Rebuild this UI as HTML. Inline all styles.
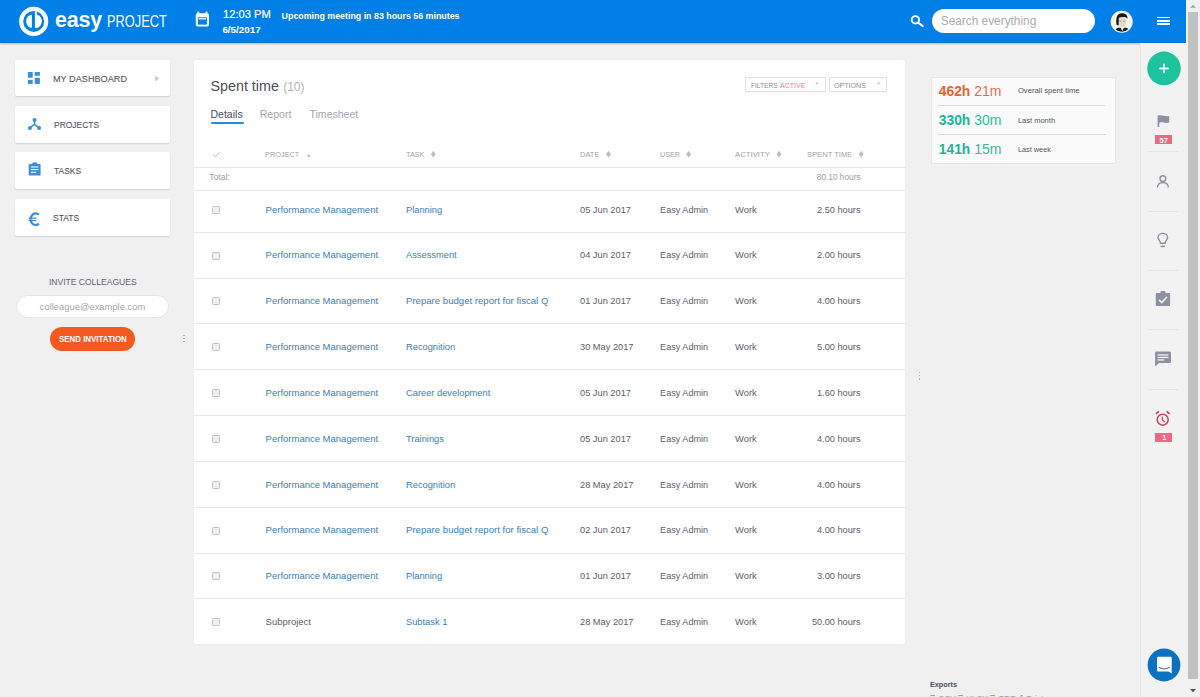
<!DOCTYPE html><html><head><meta charset="utf-8"><style>
html,body{margin:0;padding:0;}
body{width:1200px;height:697px;overflow:hidden;background:#f0f0f0;position:relative;font-family:"Liberation Sans",sans-serif;}
.t{position:absolute;line-height:1;white-space:nowrap;}
.r{position:absolute;box-sizing:border-box;}
svg{position:absolute;overflow:visible;}
</style></head><body>
<div class="r" style="left:0.00px;top:0.00px;width:1186.00px;height:43.00px;background:#0080e6;box-shadow:0 1px 2px rgba(0,0,0,0.22);border-bottom:1px solid #0574cc;"></div>
<svg style="left:0;top:0" width="60" height="43">
<circle cx="33.7" cy="21.4" r="12.55" fill="none" stroke="#fff" stroke-width="4.1"/>
<path d="M31.9,14.7 A5.7,6.55 0 0 0 31.9,27.8 Z" fill="#fff"/>
<path d="M34.9,11.2 L36.9,11.2 L36.9,14.6 A5.9,6.6 0 0 1 34.9,27.8 Z" fill="#fff"/>
</svg>
<div class="t " style="left:55.00px;top:10px;font-size:21.50px;color:#fff;font-weight:bold;letter-spacing:-0.2px;">easy</div>
<div class="t " style="left:106.50px;top:14px;font-size:15.80px;color:#fff;font-weight:normal;transform:scaleX(0.81);transform-origin:0 0;">PROJECT</div>
<svg style="left:0;top:0" width="220" height="43">
<rect x="195.8" y="13.2" width="13.2" height="13.4" rx="1.8" fill="#fff"/>
<rect x="197.4" y="11.6" width="1.8" height="3" fill="#fff"/>
<rect x="205.6" y="11.6" width="1.8" height="3" fill="#fff"/>
<rect x="197.9" y="17.2" width="9" height="7.4" fill="#0080e6"/>
<rect x="198.6" y="17.9" width="7.6" height="1.6" fill="#cfe6fb"/>
</svg>
<div class="t " style="left:222.90px;top:8px;font-size:11.60px;color:#fff;font-weight:normal;-webkit-text-stroke:0.2px #fff;transform:scaleX(0.9647);transform-origin:0 0;">12:03 PM</div>
<div class="t " style="left:222.40px;top:25px;font-size:9.84px;color:#fff;font-weight:bold;">6/5/2017</div>
<div class="t " style="left:281.60px;top:12px;font-size:8.85px;color:#fff;font-weight:bold;">Upcoming meeting in 83 hours 56 minutes</div>
<svg style="left:0;top:0" width="1200" height="43">
<circle cx="915.4" cy="19.8" r="3.7" fill="none" stroke="#fff" stroke-width="1.9"/>
<line x1="918.2" y1="22.6" x2="922.6" y2="26" stroke="#fff" stroke-width="2.2" stroke-linecap="round"/>
</svg>
<div class="r" style="left:931.70px;top:9.00px;width:163.30px;height:24.30px;background:#fff;border-radius:12.2px;"></div>
<div class="t " style="left:940.80px;top:16px;font-size:11.85px;color:#a8abb2;font-weight:normal;">Search everything</div>
<svg style="left:0;top:0" width="1200" height="43">
<defs><clipPath id="av"><circle cx="1121.7" cy="21.7" r="10"/></clipPath></defs>
<circle cx="1121.7" cy="21.7" r="11" fill="#fff"/>
<g clip-path="url(#av)">
<rect x="1110" y="10" width="24" height="24" fill="#f7f5f0"/>
<ellipse cx="1122.2" cy="22" rx="3.9" ry="5.3" fill="#e4d9c6"/>
<path d="M1116.6,25 C1115.8,19 1116.3,13.4 1121.8,13.2 C1126.2,13.2 1127.8,15.6 1127.3,19 L1126.2,17.4 C1123.5,16.6 1120.5,16.8 1118.8,18 L1118.6,25.5 Z" fill="#161616"/>
<path d="M1119.5,21.2 L1121.2,21.2 M1123.2,21.2 L1124.9,21.2" stroke="#8a7c6a" stroke-width="0.8"/>
<path d="M1114,34 L1115.6,29.2 C1117.5,27.8 1119.5,27.4 1121,28 L1122.3,30.5 L1123.6,28 C1125,27.4 1127,27.8 1128.6,29.2 L1130,34 Z" fill="#1e1e1e"/>
<path d="M1121,28.2 L1122.3,31 L1123.6,28.2 Z" fill="#f5f5f5"/>
</g>
</svg>
<div class="r" style="left:1156.70px;top:16.70px;width:13.30px;height:1.60px;background:#fff;"></div>
<div class="r" style="left:1156.70px;top:20.00px;width:13.30px;height:1.60px;background:#fff;"></div>
<div class="r" style="left:1156.70px;top:23.30px;width:13.30px;height:1.60px;background:#fff;"></div>
<div class="r" style="left:1186.00px;top:0.00px;width:14.00px;height:697.00px;background:#f1f1f1;"></div>
<div class="r" style="left:1187.60px;top:12.40px;width:10.40px;height:666.80px;background:#c1c1c1;"></div>
<svg style="left:0;top:0" width="1200" height="697">
<path d="M1190,7.7 L1193,4.7 L1196,7.7 Z" fill="#a3a3a3"/>
<path d="M1190,689 L1193,692.3 L1196,689 Z" fill="#505050"/>
</svg>
<div class="r" style="left:1140.00px;top:43.00px;width:46.00px;height:654.00px;background:#f2f2f2;border-left:1px solid #e6e6e6;"></div>
<svg style="left:0;top:0" width="1200" height="697">
<circle cx="1164" cy="68.4" r="16.8" fill="#1cc39c"/>
<rect x="1159.3" y="67.6" width="9.4" height="1.7" fill="#fff"/>
<rect x="1163.15" y="63.7" width="1.7" height="9.4" fill="#fff"/>
</svg>
<div class="r" style="left:1147.50px;top:150.90px;width:30.50px;height:1.00px;background:#e4e4e4;"></div>
<div class="r" style="left:1147.50px;top:210.50px;width:30.50px;height:1.00px;background:#e4e4e4;"></div>
<div class="r" style="left:1147.50px;top:269.70px;width:30.50px;height:1.00px;background:#e4e4e4;"></div>
<div class="r" style="left:1147.50px;top:329.00px;width:30.50px;height:1.00px;background:#e4e4e4;"></div>
<div class="r" style="left:1147.50px;top:388.90px;width:30.50px;height:1.00px;background:#e4e4e4;"></div>
<svg style="left:0;top:0" width="1200" height="697">
<!-- flag -->
<path d="M1157.6,115.2 L1157.6,127 L1159.3,127 L1159.3,122.8 C1162,121.5 1164.5,123.6 1169.2,122.6 L1169.2,116 C1165,117 1162.5,114.5 1157.6,115.6 Z" fill="#8b919e"/>
<!-- user -->
<circle cx="1162.9" cy="178.6" r="2.9" fill="none" stroke="#8b919e" stroke-width="1.4"/>
<path d="M1157.4,187.3 C1157.8,183.6 1160,182.6 1162.9,182.6 C1165.8,182.6 1168,183.6 1168.4,187.3" fill="none" stroke="#8b919e" stroke-width="1.4"/>
<!-- bulb -->
<path d="M1160.5,243.2 C1160.5,241 1158,239.5 1158,237.7 C1158,235.1 1160.2,233.4 1162.8,233.4 C1165.4,233.4 1167.6,235.1 1167.6,237.7 C1167.6,239.5 1165.1,241 1165.1,243.2 Z" fill="none" stroke="#8b919e" stroke-width="1.4"/>
<rect x="1160.6" y="245.6" width="4.4" height="1.5" fill="#8b919e"/>
<!-- clipboard -->
<rect x="1155.8" y="293" width="14.3" height="13" rx="1" fill="#8b919e"/>
<rect x="1160.4" y="291" width="5" height="3.4" rx="1" fill="#8b919e"/>
<path d="M1159,299.8 L1161.8,302.5 L1167,296.8" fill="none" stroke="#f2f2f2" stroke-width="1.6"/>
<!-- chat -->
<path d="M1156.5,351.5 L1169.6,351.5 C1170.4,351.5 1171,352.1 1171,352.9 L1171,361.5 C1171,362.3 1170.4,362.9 1169.6,362.9 L1159,362.9 L1155.1,366.5 L1155.1,352.9 C1155.1,352.1 1155.7,351.5 1156.5,351.5 Z" fill="#8b919e"/>
<rect x="1157.6" y="354.3" width="10.8" height="1.3" fill="#f2f2f2"/>
<rect x="1157.6" y="356.8" width="10.8" height="1.3" fill="#f2f2f2"/>
<rect x="1157.6" y="359.3" width="6.6" height="1.3" fill="#f2f2f2"/>
<!-- alarm -->
<circle cx="1162.7" cy="419.7" r="5.5" fill="none" stroke="#cc3b5d" stroke-width="1.5"/>
<path d="M1162.3,416.6 L1162.3,420 L1164.9,421.9" fill="none" stroke="#cc3b5d" stroke-width="1.2"/>
<path d="M1155.9,413.9 L1158.9,411.3" stroke="#cc3b5d" stroke-width="1.6"/>
<path d="M1169.6,413.9 L1166.6,411.3" stroke="#cc3b5d" stroke-width="1.6"/>
</svg>
<div class="r" style="left:1155.00px;top:135.20px;width:17.40px;height:9.00px;background:#ec6885;"></div>
<div class="t " style="left:1159.60px;top:137px;font-size:7.40px;color:#fff;font-weight:bold;">57</div>
<div class="r" style="left:1155.00px;top:433.00px;width:17.40px;height:8.50px;background:#ec6885;"></div>
<div class="t " style="left:1162.20px;top:434px;font-size:7.40px;color:#fff;font-weight:bold;">1</div>
<svg style="left:0;top:0" width="1200" height="697">
<circle cx="1164" cy="665" r="16.4" fill="#0a72bf"/>
<path d="M1157.8,656.8 L1170.9,656.8 C1171.3,656.8 1171.7,657.2 1171.7,657.6 L1171.7,673.5 L1168.5,671.4 L1157.8,671.4 C1157.4,671.4 1157,671 1157,670.6 L1157,657.6 C1157,657.2 1157.4,656.8 1157.8,656.8 Z" fill="#fff"/>
<path d="M1158.9,667.3 C1162,669.3 1166.5,669.3 1169.7,667.3" fill="none" stroke="#5f6d7c" stroke-width="1.1"/>
</svg>
<div class="r" style="left:14.80px;top:60.20px;width:155.40px;height:36.10px;background:#fff;border-radius:2px;box-shadow:0 1px 1.5px rgba(0,0,0,0.13);"></div>
<div class="t " style="left:52.60px;top:74px;font-size:9.80px;color:#4f5664;font-weight:normal;-webkit-text-stroke:0.1px #4f5664;transform:scaleX(0.9329);transform-origin:0 0;">MY DASHBOARD</div>
<div class="r" style="left:14.80px;top:106.00px;width:155.40px;height:37.20px;background:#fff;border-radius:2px;box-shadow:0 1px 1.5px rgba(0,0,0,0.13);"></div>
<div class="t " style="left:53.80px;top:120px;font-size:9.80px;color:#4f5664;font-weight:normal;-webkit-text-stroke:0.1px #4f5664;transform:scaleX(0.8647);transform-origin:0 0;">PROJECTS</div>
<div class="r" style="left:14.80px;top:151.80px;width:155.40px;height:37.20px;background:#fff;border-radius:2px;box-shadow:0 1px 1.5px rgba(0,0,0,0.13);"></div>
<div class="t " style="left:53.80px;top:166px;font-size:9.80px;color:#4f5664;font-weight:normal;-webkit-text-stroke:0.1px #4f5664;transform:scaleX(0.8661);transform-origin:0 0;">TASKS</div>
<div class="r" style="left:14.80px;top:198.50px;width:155.40px;height:37.10px;background:#fff;border-radius:2px;box-shadow:0 1px 1.5px rgba(0,0,0,0.13);"></div>
<div class="t " style="left:52.80px;top:213px;font-size:9.80px;color:#4f5664;font-weight:normal;-webkit-text-stroke:0.1px #4f5664;transform:scaleX(0.8696);transform-origin:0 0;">STATS</div>
<svg style="left:0;top:0" width="200" height="400">
<!-- dashboard -->
<rect x="27.9" y="72" width="4.8" height="5.7" fill="#3b8edb"/>
<rect x="34.7" y="72" width="5.2" height="3.8" fill="#3b8edb"/>
<rect x="27.9" y="79.9" width="4.8" height="4" fill="#3b8edb"/>
<rect x="34.7" y="77.8" width="5.2" height="6.1" fill="#3b8edb"/>
<!-- chevron -->
<path d="M155.2,75.6 L159.2,78.6 L155.2,81.6 Z" fill="#c8c9cc"/>
<!-- projects -->
<circle cx="34.5" cy="119.9" r="2" fill="#3b8edb"/>
<circle cx="29.9" cy="127.9" r="2" fill="#3b8edb"/>
<circle cx="39.1" cy="127.9" r="2" fill="#3b8edb"/>
<path d="M34.5,119.9 L34.5,124.4 L29.9,127.9 M34.5,124.4 L39.1,127.9" fill="none" stroke="#3b8edb" stroke-width="1.5"/>
<!-- tasks -->
<rect x="28.7" y="164" width="11.9" height="11.6" rx="1.2" fill="#3b8edb"/>
<rect x="32.2" y="162.6" width="4.9" height="2.6" rx="1" fill="#3b8edb"/>
<rect x="30.9" y="166.4" width="7.5" height="1.1" fill="#fff"/>
<rect x="30.9" y="169" width="7.5" height="1.1" fill="#fff"/>
<rect x="30.9" y="171.8" width="5.4" height="1.1" fill="#fff"/>
</svg>
<svg style="left:0;top:0" width="60" height="240">
<path d="M38.9,214.8 A5,5.8 0 1 0 38.9,223.6" fill="none" stroke="#3b8edb" stroke-width="2.2"/>
<rect x="28.5" y="217.5" width="8" height="1.25" fill="#3b8edb"/>
<rect x="28.5" y="219.9" width="7.5" height="1.25" fill="#3b8edb"/>
</svg>
<div class="t " style="left:48.50px;top:278px;font-size:9.30px;color:#5f6573;font-weight:normal;transform:scaleX(0.9162);transform-origin:0 0;">INVITE COLLEAGUES</div>
<div class="r" style="left:15.50px;top:294.80px;width:153.50px;height:23.70px;background:#fff;border:1px solid #e4e4e4;border-radius:12px;"></div>
<div class="t " style="left:39.80px;top:303px;font-size:9.38px;color:#a3a6ad;font-weight:normal;">colleague@example.com</div>
<div class="r" style="left:50.00px;top:327.00px;width:85.00px;height:23.80px;background:#f45a1f;border-radius:12px;"></div>
<div class="t " style="left:58.60px;top:335px;font-size:9.30px;color:#fff;font-weight:bold;transform:scaleX(0.8503);transform-origin:0 0;">SEND INVITATION</div>
<div class="r" style="left:183.40px;top:334.80px;width:1.40px;height:1.40px;background:#aaa;border-radius:1px;"></div>
<div class="r" style="left:183.40px;top:337.80px;width:1.40px;height:1.40px;background:#aaa;border-radius:1px;"></div>
<div class="r" style="left:183.40px;top:340.80px;width:1.40px;height:1.40px;background:#aaa;border-radius:1px;"></div>
<div class="r" style="left:918.90px;top:372.00px;width:1.40px;height:1.40px;background:#aaa;border-radius:1px;"></div>
<div class="r" style="left:918.90px;top:375.10px;width:1.40px;height:1.40px;background:#aaa;border-radius:1px;"></div>
<div class="r" style="left:918.90px;top:378.30px;width:1.40px;height:1.40px;background:#aaa;border-radius:1px;"></div>
<div class="r" style="left:194.00px;top:60.20px;width:711.30px;height:583.80px;background:#fff;border-radius:2px;box-shadow:0 0 1px rgba(0,0,0,0.08);"></div>
<div class="t " style="left:210.50px;top:79px;font-size:14.30px;color:#474d5a;font-weight:normal;">Spent time</div>
<div class="t " style="left:283.20px;top:81px;font-size:12.00px;color:#b3b5ba;font-weight:normal;">(10)</div>
<div class="t " style="left:210.50px;top:109px;font-size:10.53px;color:#4a4f5c;font-weight:normal;">Details</div>
<div class="t " style="left:259.70px;top:109px;font-size:10.60px;color:#a2a6ad;font-weight:normal;">Report</div>
<div class="t " style="left:309.50px;top:109px;font-size:10.52px;color:#a2a6ad;font-weight:normal;">Timesheet</div>
<div class="r" style="left:210.50px;top:122.30px;width:33.00px;height:1.90px;background:#2b8ad2;border-radius:1px;"></div>
<div class="r" style="left:745.30px;top:77.30px;width:80.70px;height:15.10px;border:1px solid #e0e0e0;border-radius:1px;"></div>
<div class="t " style="left:751.00px;top:82px;font-size:7.70px;color:#8a8f99;font-weight:normal;transform:scaleX(0.8556);transform-origin:0 0;">FILTERS</div>
<div class="t " style="left:780.00px;top:82px;font-size:7.70px;color:#e580a0;font-weight:normal;transform:scaleX(0.9169);transform-origin:0 0;">ACTIVE</div>
<div class="r" style="left:829.00px;top:77.30px;width:58.00px;height:15.10px;border:1px solid #e0e0e0;border-radius:1px;"></div>
<div class="t " style="left:834.40px;top:82px;font-size:7.70px;color:#8a8f99;font-weight:normal;transform:scaleX(0.9234);transform-origin:0 0;">OPTIONS</div>
<svg style="left:0;top:0" width="1200" height="697">
<path d="M815.3,82.6 L818.9,82.6 L817.1,84.8 Z" fill="#c4c6ca"/>
<path d="M876.9,82.6 L880.5,82.6 L878.7,84.8 Z" fill="#c4c6ca"/>
<path d="M213,154.6 L215.2,156.6 L219.8,152.2" fill="none" stroke="#b5b8be" stroke-width="0.9"/>
<path d="M306.7,156.7 L310.8,156.7 L308.75,154 Z" fill="#b9bdc4"/>
<path d="M433.3,150.8 L435.7,154.15 L433.3,157.5 L430.90000000000003,154.15 Z" fill="#b9bdc4"/>
<path d="M608.5,150.8 L610.9,154.15 L608.5,157.5 L606.1,154.15 Z" fill="#b9bdc4"/>
<path d="M688.55,150.8 L690.9499999999999,154.15 L688.55,157.5 L686.15,154.15 Z" fill="#b9bdc4"/>
<path d="M779,150.8 L781.4,154.15 L779,157.5 L776.6,154.15 Z" fill="#b9bdc4"/>
<path d="M861.25,150.8 L863.65,154.15 L861.25,157.5 L858.85,154.15 Z" fill="#b9bdc4"/>
</svg>
<div class="t " style="left:265.30px;top:151px;font-size:7.85px;color:#9ea2aa;font-weight:normal;transform:scaleX(0.9390);transform-origin:0 0;">PROJECT</div>
<div class="t " style="left:405.80px;top:151px;font-size:7.85px;color:#9ea2aa;font-weight:normal;transform:scaleX(0.9237);transform-origin:0 0;">TASK</div>
<div class="t " style="left:579.80px;top:151px;font-size:7.85px;color:#9ea2aa;font-weight:normal;transform:scaleX(0.9532);transform-origin:0 0;">DATE</div>
<div class="t " style="left:659.90px;top:151px;font-size:7.85px;color:#9ea2aa;font-weight:normal;transform:scaleX(0.9124);transform-origin:0 0;">USER</div>
<div class="t " style="left:734.80px;top:151px;font-size:7.85px;color:#9ea2aa;font-weight:normal;transform:scaleX(0.9879);transform-origin:0 0;">ACTIVITY</div>
<div class="t " style="left:807.10px;top:151px;font-size:7.85px;color:#9ea2aa;font-weight:normal;transform:scaleX(0.9675);transform-origin:0 0;">SPENT TIME</div>
<div class="r" style="left:194.00px;top:166.70px;width:711.30px;height:1.00px;background:#e8e8e8;"></div>
<div class="r" style="left:194.00px;top:189.90px;width:711.30px;height:1.00px;background:#e8e8e8;"></div>
<div class="t " style="left:209.20px;top:173px;font-size:8.60px;color:#9a9ea5;font-weight:normal;">Total:</div>
<div class="t " style="left:860.60px;top:173px;font-size:8.30px;color:#989ca3;font-weight:normal;transform:translateX(-100%);">80.10 hours</div>
<div class="r" style="left:194.00px;top:231.70px;width:711.30px;height:1.00px;background:#e8e8e8;"></div>
<div class="r" style="left:212.20px;top:205.75px;width:8.00px;height:8.00px;background:#f0f0f0;border:1px solid #c2c2c2;border-radius:1.5px;"></div>
<div class="t " style="left:265.60px;top:205px;font-size:9.50px;color:#3a7eb8;font-weight:normal;">Performance Management</div>
<div class="t " style="left:406.00px;top:206px;font-size:9.30px;color:#3a7eb8;font-weight:normal;">Planning</div>
<div class="t " style="left:580.00px;top:206px;font-size:9.25px;color:#5b606a;font-weight:normal;">05 Jun 2017</div>
<div class="t " style="left:660.10px;top:206px;font-size:9.10px;color:#5b606a;font-weight:normal;">Easy Admin</div>
<div class="t " style="left:735.10px;top:205px;font-size:9.40px;color:#5b606a;font-weight:normal;">Work</div>
<div class="t " style="left:860.50px;top:206px;font-size:9.20px;color:#5b606a;font-weight:normal;transform:translateX(-100%);">2.50 hours</div>
<div class="r" style="left:194.00px;top:277.53px;width:711.30px;height:1.00px;background:#e8e8e8;"></div>
<div class="r" style="left:212.20px;top:251.58px;width:8.00px;height:8.00px;background:#f0f0f0;border:1px solid #c2c2c2;border-radius:1.5px;"></div>
<div class="t " style="left:265.60px;top:250px;font-size:9.50px;color:#3a7eb8;font-weight:normal;">Performance Management</div>
<div class="t " style="left:406.00px;top:251px;font-size:9.30px;color:#3a7eb8;font-weight:normal;">Assessment</div>
<div class="t " style="left:580.00px;top:251px;font-size:9.25px;color:#5b606a;font-weight:normal;">04 Jun 2017</div>
<div class="t " style="left:660.10px;top:251px;font-size:9.10px;color:#5b606a;font-weight:normal;">Easy Admin</div>
<div class="t " style="left:735.10px;top:250px;font-size:9.40px;color:#5b606a;font-weight:normal;">Work</div>
<div class="t " style="left:860.50px;top:251px;font-size:9.20px;color:#5b606a;font-weight:normal;transform:translateX(-100%);">2.00 hours</div>
<div class="r" style="left:194.00px;top:323.36px;width:711.30px;height:1.00px;background:#e8e8e8;"></div>
<div class="r" style="left:212.20px;top:297.41px;width:8.00px;height:8.00px;background:#f0f0f0;border:1px solid #c2c2c2;border-radius:1.5px;"></div>
<div class="t " style="left:265.60px;top:296px;font-size:9.50px;color:#3a7eb8;font-weight:normal;">Performance Management</div>
<div class="t " style="left:406.00px;top:296px;font-size:9.60px;color:#3a7eb8;font-weight:normal;">Prepare budget report for fiscal Q</div>
<div class="t " style="left:580.00px;top:297px;font-size:9.25px;color:#5b606a;font-weight:normal;">01 Jun 2017</div>
<div class="t " style="left:660.10px;top:297px;font-size:9.10px;color:#5b606a;font-weight:normal;">Easy Admin</div>
<div class="t " style="left:735.10px;top:296px;font-size:9.40px;color:#5b606a;font-weight:normal;">Work</div>
<div class="t " style="left:860.50px;top:297px;font-size:9.20px;color:#5b606a;font-weight:normal;transform:translateX(-100%);">4.00 hours</div>
<div class="r" style="left:194.00px;top:369.19px;width:711.30px;height:1.00px;background:#e8e8e8;"></div>
<div class="r" style="left:212.20px;top:343.24px;width:8.00px;height:8.00px;background:#f0f0f0;border:1px solid #c2c2c2;border-radius:1.5px;"></div>
<div class="t " style="left:265.60px;top:342px;font-size:9.50px;color:#3a7eb8;font-weight:normal;">Performance Management</div>
<div class="t " style="left:406.00px;top:343px;font-size:9.30px;color:#3a7eb8;font-weight:normal;">Recognition</div>
<div class="t " style="left:580.00px;top:343px;font-size:9.25px;color:#5b606a;font-weight:normal;">30 May 2017</div>
<div class="t " style="left:660.10px;top:343px;font-size:9.10px;color:#5b606a;font-weight:normal;">Easy Admin</div>
<div class="t " style="left:735.10px;top:342px;font-size:9.40px;color:#5b606a;font-weight:normal;">Work</div>
<div class="t " style="left:860.50px;top:343px;font-size:9.20px;color:#5b606a;font-weight:normal;transform:translateX(-100%);">5.00 hours</div>
<div class="r" style="left:194.00px;top:415.02px;width:711.30px;height:1.00px;background:#e8e8e8;"></div>
<div class="r" style="left:212.20px;top:389.07px;width:8.00px;height:8.00px;background:#f0f0f0;border:1px solid #c2c2c2;border-radius:1.5px;"></div>
<div class="t " style="left:265.60px;top:388px;font-size:9.50px;color:#3a7eb8;font-weight:normal;">Performance Management</div>
<div class="t " style="left:406.00px;top:389px;font-size:9.30px;color:#3a7eb8;font-weight:normal;">Career development</div>
<div class="t " style="left:580.00px;top:389px;font-size:9.25px;color:#5b606a;font-weight:normal;">05 Jun 2017</div>
<div class="t " style="left:660.10px;top:389px;font-size:9.10px;color:#5b606a;font-weight:normal;">Easy Admin</div>
<div class="t " style="left:735.10px;top:388px;font-size:9.40px;color:#5b606a;font-weight:normal;">Work</div>
<div class="t " style="left:860.50px;top:389px;font-size:9.20px;color:#5b606a;font-weight:normal;transform:translateX(-100%);">1.60 hours</div>
<div class="r" style="left:194.00px;top:460.85px;width:711.30px;height:1.00px;background:#e8e8e8;"></div>
<div class="r" style="left:212.20px;top:434.90px;width:8.00px;height:8.00px;background:#f0f0f0;border:1px solid #c2c2c2;border-radius:1.5px;"></div>
<div class="t " style="left:265.60px;top:434px;font-size:9.50px;color:#3a7eb8;font-weight:normal;">Performance Management</div>
<div class="t " style="left:406.00px;top:435px;font-size:9.30px;color:#3a7eb8;font-weight:normal;">Trainings</div>
<div class="t " style="left:580.00px;top:435px;font-size:9.25px;color:#5b606a;font-weight:normal;">05 Jun 2017</div>
<div class="t " style="left:660.10px;top:435px;font-size:9.10px;color:#5b606a;font-weight:normal;">Easy Admin</div>
<div class="t " style="left:735.10px;top:434px;font-size:9.40px;color:#5b606a;font-weight:normal;">Work</div>
<div class="t " style="left:860.50px;top:435px;font-size:9.20px;color:#5b606a;font-weight:normal;transform:translateX(-100%);">4.00 hours</div>
<div class="r" style="left:194.00px;top:506.68px;width:711.30px;height:1.00px;background:#e8e8e8;"></div>
<div class="r" style="left:212.20px;top:480.73px;width:8.00px;height:8.00px;background:#f0f0f0;border:1px solid #c2c2c2;border-radius:1.5px;"></div>
<div class="t " style="left:265.60px;top:480px;font-size:9.50px;color:#3a7eb8;font-weight:normal;">Performance Management</div>
<div class="t " style="left:406.00px;top:481px;font-size:9.30px;color:#3a7eb8;font-weight:normal;">Recognition</div>
<div class="t " style="left:580.00px;top:481px;font-size:9.25px;color:#5b606a;font-weight:normal;">28 May 2017</div>
<div class="t " style="left:660.10px;top:481px;font-size:9.10px;color:#5b606a;font-weight:normal;">Easy Admin</div>
<div class="t " style="left:735.10px;top:480px;font-size:9.40px;color:#5b606a;font-weight:normal;">Work</div>
<div class="t " style="left:860.50px;top:481px;font-size:9.20px;color:#5b606a;font-weight:normal;transform:translateX(-100%);">4.00 hours</div>
<div class="r" style="left:194.00px;top:552.51px;width:711.30px;height:1.00px;background:#e8e8e8;"></div>
<div class="r" style="left:212.20px;top:526.56px;width:8.00px;height:8.00px;background:#f0f0f0;border:1px solid #c2c2c2;border-radius:1.5px;"></div>
<div class="t " style="left:265.60px;top:525px;font-size:9.50px;color:#3a7eb8;font-weight:normal;">Performance Management</div>
<div class="t " style="left:406.00px;top:525px;font-size:9.60px;color:#3a7eb8;font-weight:normal;">Prepare budget report for fiscal Q</div>
<div class="t " style="left:580.00px;top:526px;font-size:9.25px;color:#5b606a;font-weight:normal;">02 Jun 2017</div>
<div class="t " style="left:660.10px;top:526px;font-size:9.10px;color:#5b606a;font-weight:normal;">Easy Admin</div>
<div class="t " style="left:735.10px;top:525px;font-size:9.40px;color:#5b606a;font-weight:normal;">Work</div>
<div class="t " style="left:860.50px;top:526px;font-size:9.20px;color:#5b606a;font-weight:normal;transform:translateX(-100%);">4.00 hours</div>
<div class="r" style="left:194.00px;top:598.34px;width:711.30px;height:1.00px;background:#e8e8e8;"></div>
<div class="r" style="left:212.20px;top:572.39px;width:8.00px;height:8.00px;background:#f0f0f0;border:1px solid #c2c2c2;border-radius:1.5px;"></div>
<div class="t " style="left:265.60px;top:571px;font-size:9.50px;color:#3a7eb8;font-weight:normal;">Performance Management</div>
<div class="t " style="left:406.00px;top:572px;font-size:9.30px;color:#3a7eb8;font-weight:normal;">Planning</div>
<div class="t " style="left:580.00px;top:572px;font-size:9.25px;color:#5b606a;font-weight:normal;">01 Jun 2017</div>
<div class="t " style="left:660.10px;top:572px;font-size:9.10px;color:#5b606a;font-weight:normal;">Easy Admin</div>
<div class="t " style="left:735.10px;top:571px;font-size:9.40px;color:#5b606a;font-weight:normal;">Work</div>
<div class="t " style="left:860.50px;top:572px;font-size:9.20px;color:#5b606a;font-weight:normal;transform:translateX(-100%);">3.00 hours</div>
<div class="r" style="left:212.20px;top:618.22px;width:8.00px;height:8.00px;background:#f0f0f0;border:1px solid #c2c2c2;border-radius:1.5px;"></div>
<div class="t " style="left:265.60px;top:617px;font-size:9.50px;color:#5b606a;font-weight:normal;">Subproject</div>
<div class="t " style="left:406.00px;top:618px;font-size:9.30px;color:#3a7eb8;font-weight:normal;">Subtask 1</div>
<div class="t " style="left:580.00px;top:618px;font-size:9.25px;color:#5b606a;font-weight:normal;">28 May 2017</div>
<div class="t " style="left:660.10px;top:618px;font-size:9.10px;color:#5b606a;font-weight:normal;">Easy Admin</div>
<div class="t " style="left:735.10px;top:617px;font-size:9.40px;color:#5b606a;font-weight:normal;">Work</div>
<div class="t " style="left:860.50px;top:618px;font-size:9.20px;color:#5b606a;font-weight:normal;transform:translateX(-100%);">50.00 hours</div>
<div class="r" style="left:930.70px;top:76.90px;width:185.30px;height:87.60px;background:#fafafa;border:1px solid #e6e6e6;"></div>
<div class="t " style="left:938.80px;top:85px;font-size:13.80px;color:#e4622d;font-weight:bold;">462h</div>
<div class="t " style="left:974.20px;top:84px;font-size:14.00px;color:#e67048;font-weight:normal;">21m</div>
<div class="t " style="left:938.80px;top:114px;font-size:13.80px;color:#22b596;font-weight:bold;">330h</div>
<div class="t " style="left:974.20px;top:113px;font-size:14.00px;color:#35b89c;font-weight:normal;">30m</div>
<div class="t " style="left:938.80px;top:143px;font-size:13.80px;color:#22b596;font-weight:bold;">141h</div>
<div class="t " style="left:974.20px;top:142px;font-size:14.00px;color:#35b89c;font-weight:normal;">15m</div>
<div class="t " style="left:1017.90px;top:87px;font-size:7.66px;color:#4f5460;font-weight:normal;">Overall spent time</div>
<div class="t " style="left:1017.90px;top:117px;font-size:7.52px;color:#4f5460;font-weight:normal;">Last month</div>
<div class="t " style="left:1017.90px;top:146px;font-size:7.33px;color:#4f5460;font-weight:normal;">Last week</div>
<div class="r" style="left:938.40px;top:104.90px;width:166.20px;height:1.00px;background:#dcdcdc;"></div>
<div class="r" style="left:938.40px;top:133.70px;width:168.10px;height:1.00px;background:#dcdcdc;"></div>
<div class="t " style="left:929.90px;top:681px;font-size:7.31px;color:#4a5060;font-weight:bold;">Exports</div>
<div class="t " style="left:930.00px;top:695px;font-size:8.45px;color:#9a9ea6;font-weight:normal;">&#9112; CSV &#9112; XLSX &#9112; PDF &#9113; Print</div>
</body></html>
